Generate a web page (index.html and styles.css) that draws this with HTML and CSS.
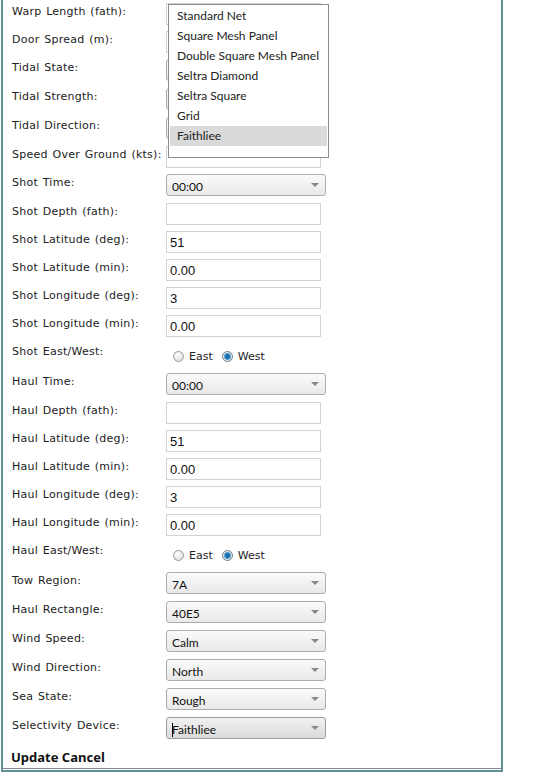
FILE: index.html
```html
<!DOCTYPE html>
<html lang="en">
<head>
	<meta charset="UTF-8">
	<title>Tow Details</title>
	<link rel="stylesheet" href="styles.css">
</head>
<body>
	<div class="panel">
		<div class="inner">
			<form class="tow-form">
				<div class="row text"><label>Warp Length (fath):</label><input type="text"></div>
				<div class="row text"><label>Door Spread (m):</label><input type="text"></div>
				<div class="row pick-row"><label>Tidal State:</label><div class="pick"><span></span><i></i></div></div>
				<div class="row pick-row"><label>Tidal Strength:</label><div class="pick"><span></span><i></i></div></div>
				<div class="row pick-row"><label>Tidal Direction:</label><div class="pick"><span></span><i></i></div></div>
				<div class="row text"><label>Speed Over Ground (kts):</label><input type="text"></div>

				<div class="row pick-row"><label>Shot Time:</label><div class="pick"><span>00:00</span><i></i></div></div>
				<div class="row text"><label>Shot Depth (fath):</label><input type="text"></div>
				<div class="row text"><label>Shot Latitude (deg):</label><input type="text" value="51"></div>
				<div class="row text"><label>Shot Latitude (min):</label><input type="text" value="0.00"></div>
				<div class="row text"><label>Shot Longitude (deg):</label><input type="text" value="3"></div>
				<div class="row text"><label>Shot Longitude (min):</label><input type="text" value="0.00"></div>
				<div class="row radio-row">
					<label>Shot East/West:</label>
					<div class="radios">
						<span class="radio"></span><span class="radio-text">East</span>
						<span class="radio on"></span><span class="radio-text">West</span>
					</div>
				</div>

				<div class="row pick-row"><label>Haul Time:</label><div class="pick"><span>00:00</span><i></i></div></div>
				<div class="row text"><label>Haul Depth (fath):</label><input type="text"></div>
				<div class="row text"><label>Haul Latitude (deg):</label><input type="text" value="51"></div>
				<div class="row text"><label>Haul Latitude (min):</label><input type="text" value="0.00"></div>
				<div class="row text"><label>Haul Longitude (deg):</label><input type="text" value="3"></div>
				<div class="row text"><label>Haul Longitude (min):</label><input type="text" value="0.00"></div>
				<div class="row radio-row">
					<label>Haul East/West:</label>
					<div class="radios">
						<span class="radio"></span><span class="radio-text">East</span>
						<span class="radio on"></span><span class="radio-text">West</span>
					</div>
				</div>

				<div class="row pick-row"><label>Tow Region:</label><div class="pick"><span>7A</span><i></i></div></div>
				<div class="row pick-row"><label>Haul Rectangle:</label><div class="pick"><span>40E5</span><i></i></div></div>
				<div class="row pick-row"><label>Wind Speed:</label><div class="pick"><span>Calm</span><i></i></div></div>
				<div class="row pick-row"><label>Wind Direction:</label><div class="pick"><span>North</span><i></i></div></div>
				<div class="row pick-row"><label>Sea State:</label><div class="pick"><span>Rough</span><i></i></div></div>
				<div class="row pick-row"><label>Selectivity Device:</label><div class="pick focus"><span><b class="caret"></b>Faithliee</span><i></i></div></div>

				<div class="actions"><a href="javascript:;">Update</a> <a href="javascript:;">Cancel</a></div>
			</form>

			<!-- open list of the selectivity device box -->
			<ul class="drop">
				<li>Standard Net</li>
				<li>Square Mesh Panel</li>
				<li>Double Square Mesh Panel</li>
				<li>Seltra Diamond</li>
				<li>Seltra Square</li>
				<li>Grid</li>
				<li class="hover">Faithliee</li>
			</ul>
		</div>
	</div>
</body>
</html>
```

FILE: styles.css
```css
body {
	margin: 0;
	background: #fff;
	font-family: "DejaVu Sans", Verdana, sans-serif;
	font-size: 11px;
	color: #222;
}
ul {
	margin: 0;
	padding: 0;
	list-style: none;
}
a {
	text-decoration: none;
	color: #111;
}
.panel {
	width: 502px;
	margin-left: 1px;
	box-sizing: border-box;
	border: 2px solid #5e9099;
	border-top: 0;
	padding-bottom: 1px;
}
.inner {
	position: relative;
	border-bottom: 1px solid #7f8b8e;
	padding-left: 9px;
}
.row {
	display: flex;
	align-items: flex-start;
}
.row.text {
	height: 28px;
}
.row.pick-row {
	height: 29px;
}
.row.radio-row {
	height: 30px;
}
.row label {
	width: 154px;
	padding-top: 5px;
	line-height: 13px;
	letter-spacing: 0.25px;
	word-spacing: 1px;
	white-space: nowrap;
	flex: none;
}
.row input {
	width: 155px;
	height: 22px;
	margin: 3px 0 0;
	padding: 0 4px 0 3px;
	box-sizing: border-box;
	border: 1px solid #d2d2d2;
	font-family: "Liberation Sans", Arial, sans-serif;
	font-size: 13px;
	color: #111;
	outline: none;
}
.pick {
	display: flex;
	align-items: center;
	justify-content: space-between;
	width: 160px;
	height: 22px;
	margin-top: 3px;
	padding: 0 6px 0 5px;
	box-sizing: border-box;
	border: 1px solid #acacac;
	border-radius: 3px;
	background: linear-gradient(#fafafa, #e9e9e9);
	font-family: Lato, "Noto Sans", sans-serif;
	font-size: 12px;
	color: #111;
}
.pick span {
	padding-top: 2px;
}
.pick i {
	width: 0;
	height: 0;
	border-left: 4px solid transparent;
	border-right: 4px solid transparent;
	border-top: 4px solid #888;
}
.pick.focus {
	border-color: #9c9c9c;
	background: linear-gradient(#f2f2f2, #dadada);
}
.caret {
	display: inline-block;
	width: 1px;
	height: 14px;
	margin-right: -1px;
	background: #000;
	vertical-align: -3px;
}
.radios {
	display: flex;
	align-items: center;
	margin: 10px 0 0 7px;
}
.radio {
	width: 11px;
	height: 11px;
	box-sizing: border-box;
	border: 1px solid #9a9a9a;
	border-radius: 50%;
	background: radial-gradient(circle at 40% 35%, #fff, #d6d6d6);
}
.radio.on {
	background: radial-gradient(circle, #1e6fa8 0 2px, #4aa0d8 3px, #e8e8e8 4px, #d0d0d0);
	border-color: #6d7f8c;
}
.radio-text {
	margin: 0 9px 0 5px;
}
.actions {
	padding: 6px 0 3px;
	margin-left: -1px;
	font-family: "Noto Sans", sans-serif;
	font-weight: bold;
	font-size: 13px;
	line-height: 16px;
}
.drop {
	position: absolute;
	left: 165px;
	top: 4px;
	width: 161px;
	height: 154px;
	box-sizing: border-box;
	padding: 1px 1px 2px;
	border: 1px solid #8c8c8c;
	background: #fff;
	font-family: Lato, "Noto Sans", sans-serif;
	font-size: 12px;
	color: #222;
}
.drop li {
	height: 20px;
	line-height: 20px;
	padding-left: 7px;
	white-space: nowrap;
}
.drop li.hover {
	background: #dadada;
}
```
